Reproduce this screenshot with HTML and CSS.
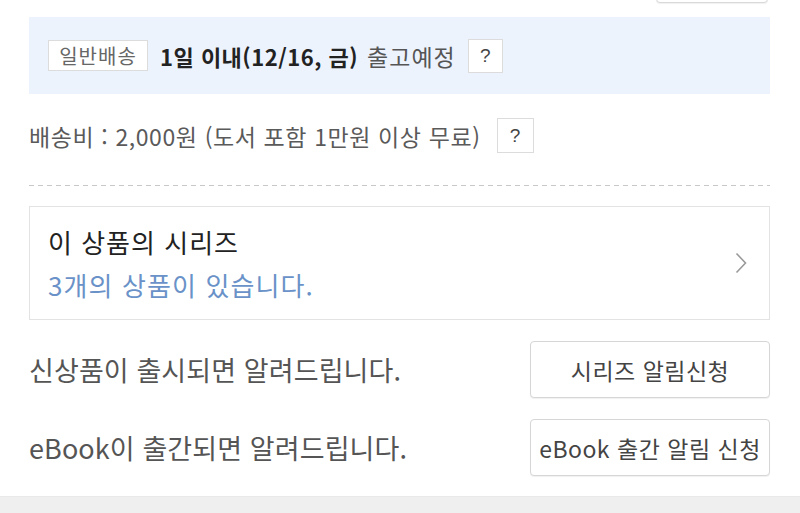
FILE: index.html
```html
<!DOCTYPE html>
<html lang="ko">
<head>
<meta charset="utf-8">
<title>상품 배송 정보</title>
<link rel="stylesheet" href="styles.css">
</head>
<body>
<div class="page">
  <div class="top-row"><button class="top-btn" type="button"></button></div>

  <div class="delivery">
    <span class="tag">일반배송</span>
    <strong class="date">1일 이내(12/16, 금)</strong>
    <span class="status">출고예정</span>
    <span class="help help-blue">?</span>
  </div>

  <div class="fee">
    <span class="fee-text">배송비 : 2,000원 (도서 포함 1만원 이상 무료)</span>
    <span class="help help-fee">?</span>
  </div>

  <div class="dash"></div>

  <a class="series" href="#">
    <div class="series-text">
      <div class="series-title">이 상품의 시리즈</div>
      <div class="series-sub">3개의 상품이 있습니다.</div>
    </div>
    <svg class="chev" width="12" height="22" viewBox="0 0 12 22"><path d="M1.5 1.5 L10.5 11 L1.5 20.5" fill="none" stroke="#9a9a9a" stroke-width="1.6"/></svg>
  </a>

  <div class="notify">
    <span class="notify-text">신상품이 출시되면 알려드립니다.</span>
    <button class="notify-btn" type="button">시리즈 알림신청</button>
  </div>
  <div class="notify notify-2">
    <span class="notify-text">eBook이 출간되면 알려드립니다.</span>
    <button class="notify-btn" type="button">eBook 출간 알림 신청</button>
  </div>
</div>
<div class="footer-bar"></div>
</body>
</html>
```

FILE: styles.css
```css
html, body {
  margin: 0;
  padding: 0;
  background: #ffffff;
}
body {
  width: 800px;
  height: 513px;
  overflow: hidden;
  font-family: "Noto Sans CJK KR", "Noto Sans", sans-serif;
  color: #555;
}
.page {
  padding: 0 30px 0 29px;
}
.top-row {
  height: 3px;
  display: flex;
  justify-content: flex-end;
  align-items: flex-start;
}
.top-btn {
  width: 112px;
  height: 40px;
  margin-top: -37px;
  margin-right: 2px;
  border: 1px solid #d9d9d9;
  border-radius: 4px;
  background: #fff;
  box-shadow: 0 1px 1px rgba(0,0,0,0.06);
  padding: 0;
}
.delivery {
  margin-top: 14px;
  height: 77px;
  background: #edf3fc;
  display: flex;
  align-items: center;
  padding: 0 19px;
}
.tag {
  box-sizing: border-box;
  height: 31px;
  width: 100px;
  border: 1px solid #dcdcdc;
  background: #fff;
  display: flex;
  align-items: center;
  justify-content: center;
  font-size: 20px;
  color: #666;
  letter-spacing: 1px;
}
.date {
  margin-left: 12px;
  font-size: 22px;
  font-weight: 700;
  color: #222;
  letter-spacing: 0.5px;
}
.status {
  margin-left: 9px;
  font-size: 23px;
  color: #555;
  letter-spacing: 1px;
}
.help {
  box-sizing: border-box;
  border: 1px solid #dcdcdc;
  background: #fff;
  display: flex;
  align-items: center;
  justify-content: center;
  font-family: "Liberation Sans", "Noto Sans", sans-serif;
  font-size: 19px;
  color: #444;
}
.help-blue {
  margin-left: 12px;
  width: 35px;
  height: 34px;
}
.fee {
  margin-top: 24px;
  height: 35px;
  display: flex;
  align-items: center;
}
.fee-text {
  font-size: 23px;
  color: #5a5a5a;
  letter-spacing: 0.6px;
}
.help-fee {
  margin-left: 16px;
  width: 37px;
  height: 35px;
}
.dash {
  margin-top: 32px;
  height: 1px;
  background: repeating-linear-gradient(to right, #c8c8c8 0, #c8c8c8 5px, transparent 5px, transparent 9px);
}
.series {
  box-sizing: border-box;
  margin-top: 20px;
  height: 114px;
  border: 1px solid #e3e3e3;
  display: flex;
  align-items: center;
  justify-content: space-between;
  padding: 0 22px 0 18px;
  text-decoration: none;
}
.series-title {
  font-size: 26px;
  color: #222;
  line-height: 34px;
  letter-spacing: 1px;
}
.series-sub {
  margin-top: 9px;
  font-size: 26px;
  color: #6a92c8;
  line-height: 34px;
  letter-spacing: 1.1px;
}
.chev {
  display: block;
}
.notify {
  margin-top: 21px;
  height: 57px;
  display: flex;
  align-items: center;
  justify-content: space-between;
}
.notify-text {
  font-size: 27px;
  color: #555;
  letter-spacing: 0.1px;
}
.notify-btn {
  box-sizing: border-box;
  width: 240px;
  height: 57px;
  border: 1px solid #d6d6d6;
  border-radius: 4px;
  background: #fff;
  box-shadow: 0 1px 1px rgba(0,0,0,0.06);
  font-family: "Noto Sans CJK KR", "Noto Sans", sans-serif;
  font-size: 23px;
  color: #444;
  padding: 0;
  letter-spacing: 0.5px;
}
.footer-bar {
  margin-top: 20px;
  height: 17px;
  border-top: 1px solid #e9e9e9;
  background: #efefef;
}
```
